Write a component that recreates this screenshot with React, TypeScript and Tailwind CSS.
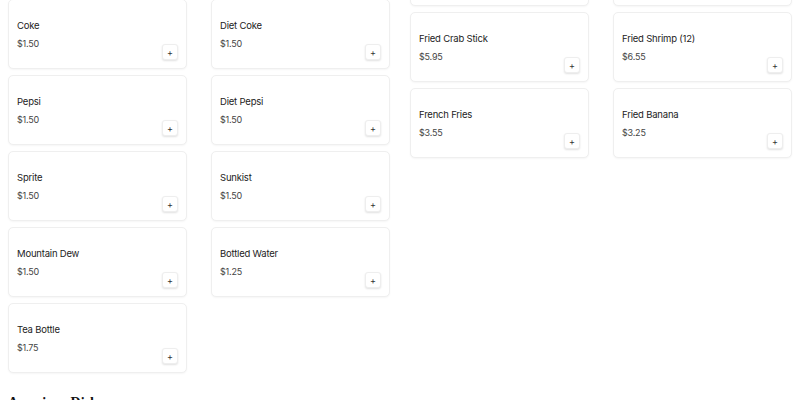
const DRINKS = [
  { name: "Coke", price: "$1.50" },
  { name: "Diet Coke", price: "$1.50" },
  { name: "Pepsi", price: "$1.50" },
  { name: "Diet Pepsi", price: "$1.50" },
  { name: "Sprite", price: "$1.50" },
  { name: "Sunkist", price: "$1.50" },
  { name: "Mountain Dew", price: "$1.50" },
  { name: "Bottled Water", price: "$1.25" },
  { name: "Tea Bottle", price: "$1.75" },
];

const APPETIZERS = [
  { name: "Egg Rolls (2)", price: "$2.95" },
  { name: "Crab Rangoon (6)", price: "$5.25" },
  { name: "Fried Crab Stick", price: "$5.95" },
  { name: "Fried Shrimp (12)", price: "$6.55" },
  { name: "French Fries", price: "$3.55" },
  { name: "Fried Banana", price: "$3.25" },
];

function ItemCard({ name, price }: { name: string; price: string }) {
  return (
    <div className="h-[70px] rounded-[5px] border border-[#efefef] bg-white px-2 pt-4 pb-2 shadow-[0_1px_2px_rgba(0,0,0,0.04)] flex items-end justify-between">
      <div className="pb-[9px]">
        <div className="text-[9.5px] leading-[14px] tracking-[-0.2px] text-[#1c1c1c]">{name}</div>
        <div className="mt-1 text-[9px] leading-[14px] tracking-[-0.2px] text-[#444]">{price}</div>
      </div>
      <button className="w-4 h-4 rounded-[3px] bg-white border border-[#eee] shadow-[0_1px_2px_rgba(0,0,0,0.12)] flex items-center justify-center text-[9px] leading-none text-[#333]">
        +
      </button>
    </div>
  );
}

export default function App() {
  return (
    <div className="h-[400px] overflow-hidden bg-white font-['Inter',sans-serif]">
      <div className="-mt-[64px] px-2">
        <div className="grid grid-cols-2 gap-5 items-start">
          {/* Drinks */}
          <div className="mt-[63px] grid grid-cols-2 gap-x-6 gap-y-1.5">
            {DRINKS.map((item) => (
              <ItemCard key={item.name} {...item} />
            ))}
          </div>
          {/* Appetizers */}
          <div className="grid grid-cols-2 gap-x-6 gap-y-1.5">
            {APPETIZERS.map((item) => (
              <ItemCard key={item.name} {...item} />
            ))}
          </div>
        </div>
        <h2 className="mt-[20px] font-['Liberation_Serif',serif] text-[14px] font-bold leading-[20px] text-[#111]">
          American Dishes
        </h2>
      </div>
    </div>
  );
}
